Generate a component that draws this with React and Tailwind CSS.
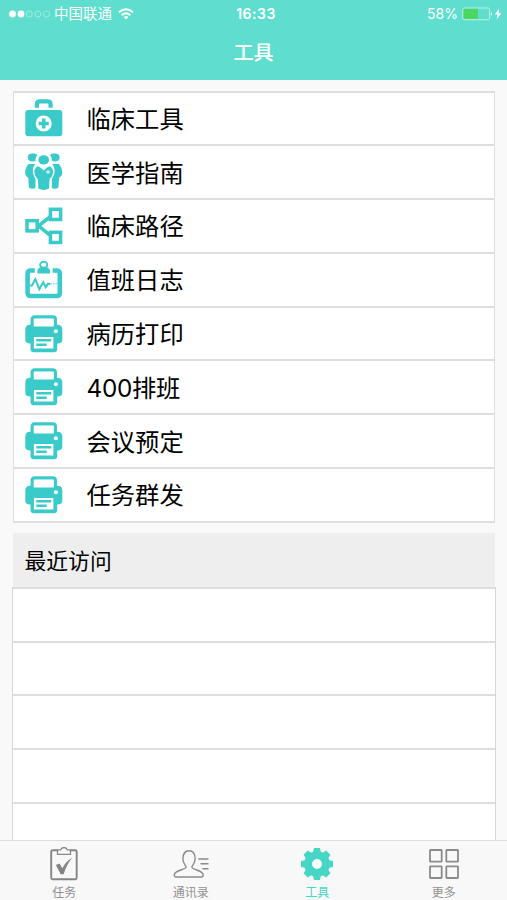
const TEAL = "#3bcaca";

function BagIcon() {
    return (
        <svg viewBox="0 0 38 38" className="h-[38px] w-[38px]" fill="none">
            <path d="M11.9 8.8V5.4q0-3 3-3h7.700q3 0 3 3v3.400" stroke={TEAL} strokeWidth="4.200" />
            <rect x="0.3" y="11" width="37" height="26.2" rx="3" fill={TEAL} />
            <circle cx="18.7" cy="24.5" r="8" fill="#fff" />
            <path d="M18.7 19.400v10.200M13.600 24.500h10.200" stroke={TEAL} strokeWidth="3.600" />
        </svg>
    );
}

function TeamIcon() {
    return (
        <svg viewBox="0 0 38 38" className="h-[38px] w-[38px]" fill={TEAL}>
            <path d="M2.800 4.400C2.800 1.600 5 .600 7.700.600c2.600 0 4.400.6 4.700 1.600-1.400 1.400-2 3-1.700 5.400-1 .9-2.100 1.100-3.200 1C4.600 8.400 2.800 6.900 2.800 4.400Z" />
            <path d="M34.600 4.400C34.600 1.600 32.400.600 29.700.600c-2.600 0-4.400.6-4.700 1.600 1.400 1.400 2 3 1.700 5.400 1 .9 2.100 1.100 3.200 1 2.900-.2 4.700-1.700 4.700-4.200Z" />
            <ellipse cx="18.700" cy="6.900" rx="5.300" ry="4.700" />
            <path d="M3.600 10.900h6.800c-1.900 2-2.800 4.500-2.600 7.600.2 2.800 1.300 5 2.700 7.200v9.400c-1.700 1.200-4.800.8-6.300-.4-.9-3-.5-6.700-.9-10C1 23.500 0 21.700.2 19.500c.1-3.200 1-6.500 3.400-8.600Z" />
            <path d="M33.800 10.900H27c1.900 2 2.800 4.500 2.600 7.600-.2 2.800-1.300 5-2.700 7.200v9.400c1.700 1.200 4.800.8 6.300-.4.9-3 .5-6.700.9-10 2.300-1.200 3.300-3 3.100-5.200-.1-3.200-1-6.500-3.400-8.600Z" />
            <path d="M12.500 13.300c1.900.3 4.200 2 6.200 4.300 2-2.300 4.300-4 6.200-4.300 2.200 1.300 3.400 3.700 3.100 6.500-.3 2.700-1.600 4.600-3.400 6.100l-.6 9.600c-2.600 1.900-8 1.900-10.600 0l-.6-9.600c-1.800-1.500-3.100-3.400-3.400-6.100-.3-2.800.9-5.200 3.100-6.500Z" />
            <path d="M20.900 19h4.400M23.100 17v4" stroke="#c5efee" strokeWidth="1.500" />
        </svg>
    );
}

function PathIcon() {
    return (
        <svg viewBox="0 0 38 38" className="h-[38px] w-[38px]" fill="none" stroke={TEAL} strokeWidth="3.500">
            <rect x="2" y="13.700" width="10.200" height="10.200" />
            <rect x="25.400" y="2.300" width="10.200" height="10.200" />
            <rect x="25.400" y="25.300" width="10.200" height="10.200" />
            <path d="M25.500 9.500 13.500 18.800l12 9.800" />
        </svg>
    );
}

function LogIcon() {
    return (
        <svg viewBox="0 0 38 38" className="h-[38px] w-[38px]" fill="none">
            <path d="M9.800 9.500H5.800q-3.200 0-3.200 3.200v19.100q0 3.200 3.200 3.200h25.800q3.200 0 3.200-3.200V12.700q0-3.200-3.200-3.200h-4" stroke={TEAL} strokeWidth="4.600" />
            <ellipse cx="18.700" cy="3.700" rx="3.600" ry="2.900" stroke={TEAL} strokeWidth="1.800" />
            <path d="M14.800 6.200h7.800l2.400 2.700v3.700H12.400V8.900Z" fill={TEAL} />
            <path d="M5 24.500h2l3.300-6.300 4 10 4-7 2.500 5 2-3.300h2.400" stroke={TEAL} strokeWidth="2.100" />
            <path d="M25.200 22.700h7" stroke={TEAL} strokeWidth="1.300" strokeDasharray="1.600 1" opacity=".6" />
        </svg>
    );
}

function PrintIcon() {
    return (
        <svg viewBox="0 0 38 38" className="h-[38px] w-[38px]" fill="none">
            <path d="M5 9.700h27.500q4.800 0 4.800 4.800v10.200q0 3.800-4.800 3.800h-.3V34q0 3.300-3.300 3.300H8.800q-3.300 0-3.300-3.300v-5.500H5q-4.700 0-4.700-3.800V14.500q0-4.800 4.700-4.800Z" fill={TEAL} />
            <path d="M7.200 12V4.400q0-2.400 2.400-2.400h18.300q2.400 0 2.400 2.400V12" stroke={TEAL} strokeWidth="3.300" />
            <path d="M8.800 3.600h19.900v7.900H8.800Z" fill="#fff" />
            <path d="M8.900 22h19.500v11.500H8.900Z" fill="#fff" />
            <path d="M11.300 25.200h14.900M11.300 29.700h10.400" stroke={TEAL} strokeWidth="2.600" />
            <circle cx="30.900" cy="16.300" r="2" fill="#fff" />
        </svg>
    );
}

function ClipboardIcon() {
    return (
        <svg viewBox="0 0 28 34" className="h-[34px] w-[28px]" fill="none" stroke="#858585">
            <path d="M7.500 3.200H2.700q-1.500 0-1.500 1.500v26q0 1.500 1.500 1.500h22.500q1.500 0 1.500-1.500v-26q0-1.500-1.500-1.500h-4.700" strokeWidth="1.900" />
            <path d="M7.500 2.900h3.300q.7-2.300 3.200-2.300t3.200 2.300h3.300v4.400h-13Z" strokeWidth="1.300" />
            <path d="m5.800 18 3.800-1.500 2.700 4.700c2.200-4.300 5-7.700 10-10.500-4 4.700-6.500 9.700-8.700 16.500h-2.900Z" fill="#858585" stroke="none" />
        </svg>
    );
}

function ContactsIcon() {
    return (
        <svg viewBox="0 0 36 28" className="h-[28px] w-[36px]" fill="none" stroke="#8b8b8b">
            <path d="M13.100 17.200c.2-1.500-3.200-3.700-3.200-8.200 0-5 2.300-8.200 6.100-8.200s6.100 3.200 6.100 8.200c0 4.500-3.400 6.700-3.200 8.200.2 2.500 11.300 3 11.300 7.800 0 1.400-.6 2-2 2H3.200c-1.400 0-2-.6-2-2 0-4.800 11.700-5.300 11.900-7.800Z" strokeWidth="1.400" />
            <path d="M25.300 9h10.200M27.500 13.700h8M29.500 18.700h6" strokeWidth="1.500" />
        </svg>
    );
}

function GearIcon() {
    return (
        <svg viewBox="-16 -16 32 32" className="h-8 w-8">
            <circle r="12.800" fill="#45d6c5" />
            <g fill="#45d6c5">
                {[0, 45, 90, 135, 180, 225, 270, 315].map((deg) => (
                    <path key={deg} d="M-4.300-10 -3-16H3L4.300-10Z" transform={`rotate(${deg})`} />
                ))}
            </g>
            <circle r="4.900" fill="#fafafa" />
        </svg>
    );
}

function MoreIcon() {
    return (
        <svg viewBox="0 0 30 30" className="h-[30px] w-[30px]" fill="none" stroke="#8b8b8b" strokeWidth="1.800">
            <rect x="1" y="1" width="11.700" height="11.700" rx=".5" />
            <rect x="17.300" y="1" width="11.700" height="11.700" rx=".5" />
            <rect x="1" y="17.300" width="11.700" height="11.700" rx=".5" />
            <rect x="17.300" y="17.300" width="11.700" height="11.700" rx=".5" />
        </svg>
    );
}

function StatusBar() {
    return (
        <div className="grid h-[27px] grid-cols-3 items-center pl-[9px] pr-[5px] text-[14px]">
            <div className="flex items-center">
                <svg viewBox="0 0 42 8" className="h-2 w-[42px]" fill="none">
                    <circle cx="3.500" cy="4" r="3.400" fill="#fff" />
                    <circle cx="12" cy="4" r="3.400" fill="#fff" />
                    <circle cx="20.300" cy="4" r="3" stroke="#b0efe5" strokeWidth=".8" />
                    <circle cx="28.900" cy="4" r="3" stroke="#b0efe5" strokeWidth=".8" />
                    <circle cx="37.500" cy="4" r="3" stroke="#b0efe5" strokeWidth=".8" />
                </svg>
                <span className="ml-[3px] text-[14.5px] whitespace-nowrap">中国联通</span>
                <svg viewBox="0 0 16 12" className="ml-[6px] h-3 w-4" fill="none" stroke="#fff" strokeWidth="2">
                    <path d="M1 4.300q7-6.200 14 0M3.700 7.200q4.300-3.800 8.600 0" />
                    <path d="m5.600 9 2.400 2.600L10.400 9Q8 7.200 5.600 9Z" fill="#fff" stroke="none" />
                </svg>
            </div>
            <span className="pl-px text-center font-semibold tracking-[0.5px]">16:33</span>
            <div className="flex items-center justify-end">
                <span className="text-[14px]">58%</span>
                <svg viewBox="0 0 32 14" className="ml-1 h-[14px] w-8" fill="none">
                    <rect x=".7" y="1" width="27" height="11.700" rx="1.500" stroke="#b9f2dd" />
                    <rect x="1.500" y="1.800" width="14.500" height="10.100" fill="#4bd763" />
                    <path d="M29 5q2 1.800 0 3.700Z" fill="#fff" />
                </svg>
                <svg viewBox="0 0 8 12" className="h-3 w-2" fill="#fff">
                    <path d="M5.200.5.800 6.500h2.700L2.600 11.500 7.300 5.300H4.500Z" />
                </svg>
            </div>
        </div>
    );
}

const tools = [
    { name: "临床工具", Icon: BagIcon },
    { name: "医学指南", Icon: TeamIcon },
    { name: "临床路径", Icon: PathIcon },
    { name: "值班日志", Icon: LogIcon },
    { name: "病历打印", Icon: PrintIcon },
    { name: "400排班", Icon: PrintIcon, tight: true },
    { name: "会议预定", Icon: PrintIcon },
    { name: "任务群发", Icon: PrintIcon },
];

const tabs = [
    { name: "任务", Icon: ClipboardIcon },
    { name: "通讯录", Icon: ContactsIcon },
    { name: "工具", Icon: GearIcon, active: true },
    { name: "更多", Icon: MoreIcon },
];

export default function App() {
    return (
        <div className="flex h-[900px] w-[507px] flex-col overflow-hidden bg-[#f9f9f9] font-[Inter,'Noto_Sans_CJK_SC',sans-serif] text-black">
            <header className="h-[79.500px] shrink-0 bg-[#5fdecf] text-white">
                <StatusBar />
                <h1 className="pt-px text-center text-[20px] leading-[50px] font-medium">工具</h1>
            </header>

            <main className="flex min-h-0 flex-1 flex-col overflow-hidden pt-[11px]">
                <ul className="ml-[13px] w-[482px] shrink-0 border-x-[1.500px] border-b-2 border-[#dedede] bg-white">
                    {tools.map(({ name, Icon, tight }) => (
                        <li key={name} className="flex h-[53.800px] items-center border-t-2 border-[#dedede] pl-[11px]">
                            <Icon />
                            <span className={`ml-[23.500px] pt-px text-[24.300px] leading-none ${tight ? "tracking-[-0.3px]" : ""}`}>{name}</span>
                        </li>
                    ))}
                </ul>

                <h2 className="mt-[10px] ml-[13px] h-[54px] w-[482px] shrink-0 bg-[#eeeeee] pl-[11.500px] text-[21.800px] leading-[56px]">最近访问</h2>
                <ul className="ml-3 w-[484px] shrink-0 border-x border-[#d8d8d8] bg-white">
                    {[0, 1, 2, 3, 4].map((row) => (
                        <li key={row} className="h-[53.800px] border-t-2 border-[#dedede]" />
                    ))}
                </ul>
            </main>

            <nav className="grid h-[60px] shrink-0 grid-cols-4 border-t border-[#dcdcdc] bg-[#f8f8f8] pl-px">
                {tabs.map(({ name, Icon, active }) => (
                    <div key={name} className={`flex flex-col items-center ${active ? "text-[#45d6c5]" : "text-[#929292]"}`}>
                        <div className="flex h-[45px] items-center">
                            <Icon />
                        </div>
                        <span className="text-[12px] leading-[14px]">{name}</span>
                    </div>
                ))}
            </nav>
        </div>
    );
}
